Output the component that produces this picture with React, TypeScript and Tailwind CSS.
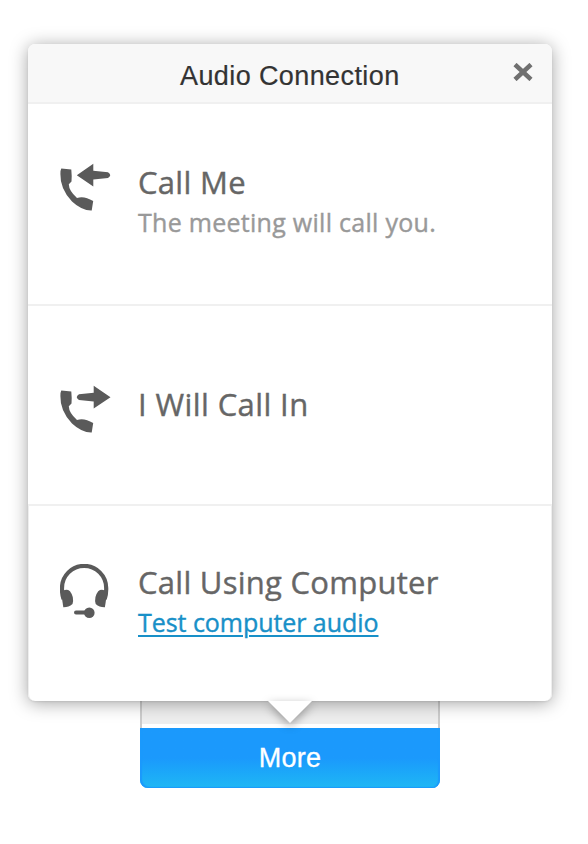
import React from "react";

const HANDSET =
  "M1.300 4.500 L11.300 5.500 Q12 12 11.500 17.500 L8.800 20.300 Q9 27 17 34 Q24 31.500 33.200 37 L31.700 46.500 Q22 46.800 12 37.500 Q0 25 0.400 10 Q0.400 6 1.300 4.500Z";

function CallMeIcon() {
  return (
    <svg width="52" height="50" viewBox="0 0 52 50" fill="#5a5a5a" className="overflow-visible">
      <path d={HANDSET} />
      <path d="M16.800 11.300 L33.300 -0.300 V6.800 L48 8.300 Q52.500 11.300 48 14 L33.300 15.400 V22.500Z" />
    </svg>
  );
}

function CallInIcon() {
  return (
    <svg width="52" height="50" viewBox="0 0 52 50" fill="#5a5a5a" className="overflow-visible">
      <path d={HANDSET} />
      <path d="M50.500 11.300 L33.700 -0.300 V6.800 L19 8.300 Q14.500 11.300 19 14 L33.700 15.400 V22.500Z" />
    </svg>
  );
}

function HeadsetIcon() {
  return (
    <svg width="50" height="56" viewBox="0 0 50 56" fill="#5a5a5a">
      <path
        d="M3.500 35 Q1.800 30 2 24 A22.100 22.100 0 0 1 46.200 24 Q46.400 30 44.700 35"
        fill="none"
        stroke="#5a5a5a"
        strokeWidth="4.200"
      />
      <path d="M1 28 Q6 24 10 27.200 Q14.500 33 12.500 40 Q8.500 43.500 3.300 43.300Z" />
      <path d="M47.200 28 Q42 24 38.200 27.200 Q33.700 33 35.700 40 Q39.500 43.500 44.900 43.300Z" />
      <rect x="14" y="46.600" width="14" height="4" rx="2" />
      <circle cx="29.300" cy="48.700" r="5.300" />
    </svg>
  );
}

export default function App() {
  return (
    <div className="h-[844px] w-[588px] overflow-hidden bg-white pt-11 font-['Liberation_Sans',Arial,sans-serif]">
      <div className="relative z-10 ml-7 flex h-[657px] w-[524px] flex-col rounded-[7px] bg-white shadow-[0_2px_18px_rgba(0,0,0,0.36),0_1px_2px_rgba(0,0,0,0.08)]">
        <header className="flex h-[60px] items-start rounded-t-[7px] border-b-2 border-[#f0f0f0] bg-[#f8f8f8]">
          <h1 className="ml-[152px] w-[333px] pt-[17px] text-[27px] leading-[30px] tracking-[0.4px] whitespace-nowrap text-[#333] [-webkit-text-stroke:0.2px_#333]">
            Audio Connection
          </h1>
          <button aria-label="Close" className="mt-[19px]">
            <svg width="20" height="18" viewBox="0 0 20 18">
              <path d="M2 1.500 L18 16.500 M18 1.500 L2 16.500" stroke="#707070" strokeWidth="4.500" />
            </svg>
          </button>
        </header>

        <section className="flex h-[202px] border-b-2 border-[#f0f0f0] pl-8 font-['Open_Sans',sans-serif]">
          <div className="w-[78px] pt-[60px]"><CallMeIcon /></div>
          <div className="pt-[57px] whitespace-nowrap">
            <h2 className="text-[31px] leading-[42px] tracking-[0.3px] text-[#666] [-webkit-text-stroke:0.4px_#666]">Call Me</h2>
            <p className="text-[25px] leading-[38px] tracking-[0.28px] text-[#999] [-webkit-text-stroke:0.4px_#999]">The meeting will call you.</p>
          </div>
        </section>

        <section className="flex h-[200px] border-b-2 border-[#f0f0f0] pl-8 font-['Open_Sans',sans-serif]">
          <div className="w-[78px] pt-[80px]"><CallInIcon /></div>
          <h2 className="pt-[77px] text-[31px] leading-[42px] tracking-[0.4px] whitespace-nowrap text-[#666] [-webkit-text-stroke:0.4px_#666]">I Will Call In</h2>
        </section>

        <section className="flex h-[195px] rounded-b-[7px] border-x border-[#eee] pl-[31px] font-['Open_Sans',sans-serif]">
          <div className="w-[78px] pt-[58px]"><HeadsetIcon /></div>
          <div className="pt-[55px] whitespace-nowrap">
            <h2 className="text-[31px] leading-[42px] tracking-[0.27px] text-[#666] [-webkit-text-stroke:0.4px_#666]">Call Using Computer</h2>
            <a className="block text-[25px] leading-[38px] tracking-[-0.05px] text-[#1890c8] underline decoration-2 underline-offset-[3px] [-webkit-text-stroke:0.4px_#1890c8]">Test computer audio</a>
          </div>
        </section>

        <svg className="absolute top-[656px] left-[228px] overflow-visible drop-shadow-[0_3px_5px_rgba(0,0,0,0.35)]" width="68" height="24" viewBox="0 0 68 24">
          <path d="M12 1 H56 L34 23Z" fill="#fff" />
        </svg>
      </div>

      <div className="ml-[140px] w-[300px]">
        <div className="h-[27px] border-x-2 border-[#ccc]">
          <div className="h-[23px] bg-[#eee]" />
        </div>
        <button className="block h-[60px] w-full rounded-b-[8px] bg-linear-to-b from-[#1b99fc] from-50% to-[#20b7f4] text-center text-[27px] leading-[57px] tracking-[0.2px] text-white shadow-[inset_2px_-1px_1px_#1b99fc,inset_-2px_0_1px_#1b99fc] [-webkit-text-stroke:0.3px_#fff]">
          More
        </button>
      </div>
    </div>
  );
}
